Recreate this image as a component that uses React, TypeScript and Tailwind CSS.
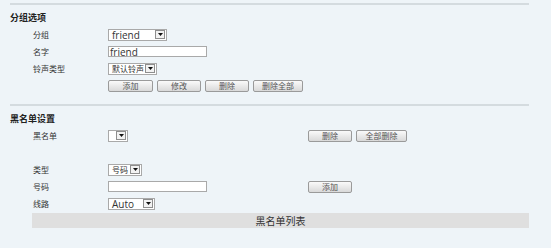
import React from 'react';

const cjk = 'font-["Noto_Sans_CJK_SC","Noto_Sans",sans-serif]';

function Arrow() {
  return (
    <span className="ml-auto mr-[1px] flex h-[9px] w-[10px] items-center justify-center border border-[#8e8e8e] bg-[#f2f2f2]">
      <svg width="5" height="3" viewBox="0 0 5 3">
        <path d="M0 0h5L2.5 3z" fill="#111" />
      </svg>
    </span>
  );
}

function Select({ value, className, latin }: { value: string; className: string; latin?: boolean }) {
  return (
    <div className={`flex h-[12px] items-center border border-[#a9a9a9] bg-white ${className}`}>
      <span
        className={`pl-[3px] leading-none text-[#333] ${
          latin ? 'font-["Open_Sans",sans-serif] text-[10px]' : `${cjk} text-[8px]`
        }`}
      >
        {value}
      </span>
      <Arrow />
    </div>
  );
}

function Btn({ label, className }: { label: string; className: string }) {
  return (
    <button
      className={`flex h-[12px] items-center justify-center rounded-[2px] border border-[#9a9a9a] bg-gradient-to-b from-[#fafafa] to-[#d9d9d9] leading-none text-[#555] text-[8px] ${cjk} ${className}`}
    >
      {label}
    </button>
  );
}

function Row({ label, children, right }: { label?: string; children?: React.ReactNode; right?: React.ReactNode }) {
  return (
    <div className="flex h-[17px] items-center">
      <div className={`w-[108px] pl-[33px] text-[8px] leading-none text-[#333] ${cjk}`}>{label}</div>
      <div className="flex w-[200px] items-center gap-[4px]">{children}</div>
      <div className="flex items-center gap-[4px]">{right}</div>
    </div>
  );
}

function Heading({ text }: { text: string }) {
  return (
    <div className={`mt-[6px] mb-[3px] flex h-[12px] items-center pl-[10px] text-[9px] font-bold leading-none text-[#222] ${cjk}`}>
      {text}
    </div>
  );
}

export default function App() {
  return (
    <div className="h-[248px] w-[551px] overflow-hidden bg-[#eef4f8] pt-[3px]">
      <div className="ml-[10px] h-[2px] w-[519px] bg-[#d4dbdf]" />
      <Heading text="分组选项" />
      <Row label="分组">
        <Select value="friend" latin className="w-[59px]" />
      </Row>
      <Row label="名字">
        <div className="flex h-[11px] w-[99px] items-center border border-[#a9a9a9] bg-white pl-[1px] font-['Open_Sans',sans-serif] text-[10px] leading-none text-[#333]">
          friend
        </div>
      </Row>
      <Row label="铃声类型">
        <Select value="默认铃声" className="w-[49px]" />
      </Row>
      <Row
        right={null}
      >
        <Btn label="添加" className="w-[45px] shrink-0" />
        <Btn label="修改" className="w-[44px] shrink-0" />
        <Btn label="删除" className="w-[44px] shrink-0" />
        <Btn label="删除全部" className="w-[50px] shrink-0" />
      </Row>

      <div className="mt-[10px] ml-[10px] h-[2px] w-[519px] bg-[#d4dbdf]" />
      <Heading text="黑名单设置" />
      <Row
        label="黑名单"
        right={
          <>
            <Btn label="删除" className="w-[44px]" />
            <Btn label="全部删除" className="w-[51px]" />
          </>
        }
      >
        <Select value="" className="w-[20px]" />
      </Row>
      <Row />
      <Row label="类型">
        <Select value="号码" className="w-[34px]" />
      </Row>
      <Row label="号码" right={<Btn label="添加" className="w-[44px]" />}>
        <div className="h-[11px] w-[99px] border border-[#a9a9a9] bg-white" />
      </Row>
      <Row label="线路">
        <Select value="Auto" latin className="w-[47px]" />
      </Row>
      <div
        className={`mt-[1px] ml-[32px] flex h-[15px] w-[497px] items-center justify-center bg-[#dfdfdf] text-[10px] leading-none text-[#333] ${cjk}`}
      >
        黑名单列表
      </div>
    </div>
  );
}
